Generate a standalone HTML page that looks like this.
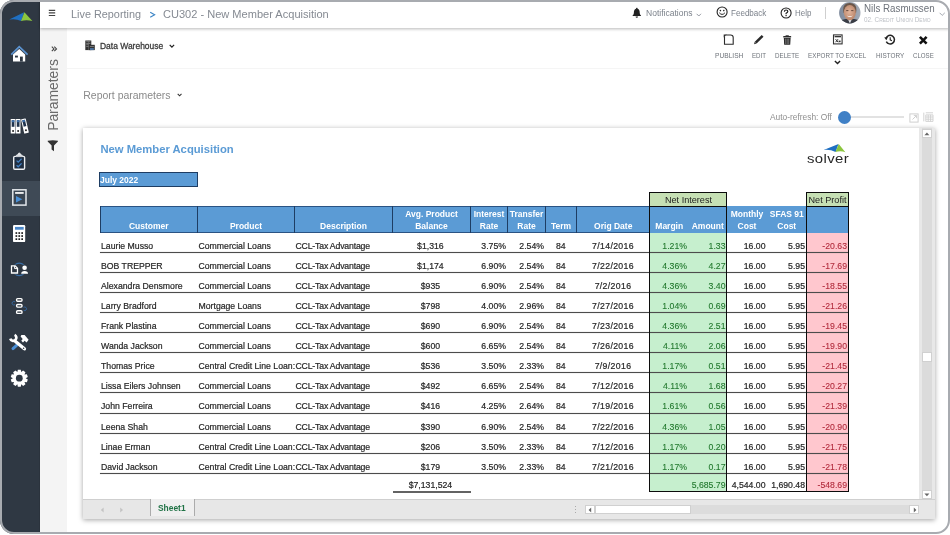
<!DOCTYPE html>
<html><head><meta charset="utf-8"><title>CU302 - New Member Acquisition</title>
<style>
*{box-sizing:border-box;margin:0;padding:0}
html,body{width:950px;height:535px;overflow:hidden;background:#fff;font-family:"Liberation Sans",sans-serif;}
#frame{position:absolute;left:0;top:0;width:950px;height:534px;border-radius:14px;overflow:hidden;background:#fff}
#frameb{position:absolute;left:0;top:0;width:950px;height:534px;border:2.5px solid #a8abb0;border-radius:14px;z-index:50;pointer-events:none}
#app{position:absolute;left:0;top:0;width:950px;height:535px;will-change:transform}
#side{position:absolute;left:0;top:0;width:40px;height:535px;background:#2f3843;border-right:1.5px solid #2b333d}
#side .act{position:absolute;left:0;top:181px;width:40px;height:35px;background:#3f4a56}
#side svg{position:absolute}
#params{position:absolute;left:40px;top:27px;width:27px;height:508px;background:#f4f4f4}
#top{position:absolute;left:40px;top:0;width:910px;height:27.5px;background:#fff;box-shadow:0 1px 3px rgba(0,0,0,.28);z-index:5}
#tool{position:absolute;left:67px;top:27px;width:883px;height:41.5px;background:#fff;border-bottom:1px solid #f5f5f5}
.t{position:absolute;white-space:nowrap;z-index:10}
svg.i{position:absolute;z-index:10;overflow:visible}
#sheet{position:absolute;left:82.5px;top:127.5px;width:852px;height:391.5px;background:#fff;box-shadow:0 1px 5px rgba(0,0,0,.36)}
#grid{position:absolute;left:-82.5px;top:-127.5px;width:950px;height:535px;font-size:8.7px;color:#262626}
.c{position:absolute;height:20.07px;line-height:12px;padding-top:7.4px;white-space:nowrap;overflow:hidden;padding-left:1px;padding-right:1.5px;-webkit-text-stroke:0.2px}
.al{text-align:left}.ac{text-align:center}.ar{text-align:right}
.c.g{color:#21782d;-webkit-text-stroke:0.1px}
.c.rd{color:#b22b3c;-webkit-text-stroke:0.1px}
.k2{letter-spacing:-0.17px}.k7{letter-spacing:0.36px}.k3{padding-right:3.2px}
.rl{position:absolute;left:100px;width:748.5px;height:1px;background:#4c4c4c;box-shadow:0 0 .8px rgba(70,70,70,.75)}
.hd{position:absolute;color:#fff;font-weight:bold;text-align:center;font-size:8.5px;line-height:12px;white-space:nowrap}
.vl{position:absolute;width:1.2px;background:#1e3d63;top:206px;height:26.5px}
.bx{position:absolute;border:1.5px solid #0c0c0c}
.lb{position:absolute;background:#c6e0b4;text-align:center;padding-top:1px;font-size:9.1px;color:#222;line-height:12px;white-space:nowrap;overflow:hidden}
</style></head><body>
<div id="frame"><div id="app">

<div id="side"><div class="act"></div>
<svg width="40" height="535" viewBox="0 0 40 535" style="left:0;top:0">
<!-- logo -->
<path d="M9.2,19.6 L24.2,12.2 L21.2,20.9 Q15.5,18.4 9.2,19.6Z" fill="#1f6fc2"/>
<path d="M24.4,12.3 L32.4,21 Q26.5,19.4 21,21Z" fill="#8cc63f"/>
<!-- home -->
<path d="M13,54.6 L19.25,49 L25.2,54.6 V61.6 H13Z" fill="#fff"/>
<path d="M11.2,54.6 L19.25,46.6 L27.6,54.6" fill="none" stroke="#5b93d0" stroke-width="1.7" stroke-linejoin="miter"/>
<rect x="15" y="55.6" width="2.9" height="1.9" fill="#2f3843"/>
<rect x="20" y="56.6" width="2.8" height="5" fill="#2f3843"/>
<!-- binders -->
<g>
<rect x="10.7" y="119" width="4.7" height="14.6" rx=".6" fill="#fff"/>
<rect x="11.7" y="120.2" width="2.7" height="6.6" fill="#21344d"/>
<rect x="11.7" y="120.2" width="2.7" height="2" fill="#4172aa"/>
<circle cx="13.05" cy="130.9" r="1" fill="#222"/>
<rect x="15.8" y="119" width="4.7" height="14.6" rx=".6" fill="#fff"/>
<rect x="16.8" y="120.2" width="2.7" height="6.6" fill="#21344d"/>
<rect x="16.8" y="120.2" width="2.7" height="2" fill="#4172aa"/>
<circle cx="18.15" cy="130.9" r="1" fill="#222"/>
<g transform="rotate(-13 25 126)">
<rect x="22.6" y="118.6" width="4.7" height="14.8" rx=".6" fill="#fff"/>
<rect x="23.6" y="119.8" width="2.7" height="6.6" fill="#21344d"/>
<rect x="23.6" y="119.8" width="2.7" height="2" fill="#4172aa"/>
<circle cx="24.95" cy="130.4" r="1" fill="#222"/>
</g></g>
<!-- clipboard -->
<rect x="13.7" y="156.4" width="10.9" height="12.8" rx="1.2" fill="#1f2d40" stroke="#eceef1" stroke-width="1.4"/>
<path d="M15.7,156.8 Q15.7,154.6 17.5,154.3 Q19.3,150.6 21.1,154.3 Q22.9,154.6 22.9,156.8Z" fill="#e4e7ea"/>
<rect x="16" y="155.6" width="6.4" height="1.5" fill="#c9ccd1"/>
<path d="M16.6,160.6 L18.2,162.2 L21.6,158.8 M16.6,165.2 L18.2,166.8 L21.6,163.4" fill="none" stroke="#4282c6" stroke-width="1.25"/>
<!-- play -->
<rect x="12.8" y="189.8" width="13.2" height="15.3" fill="#3a4653" stroke="#e3e7ec" stroke-width="1.5"/>
<rect x="15.1" y="192.1" width="8.6" height="1.7" fill="#fff"/>
<path d="M16,195.9 L22.3,199.2 L16,202.6Z" fill="#4a8fd6"/>
<!-- calculator -->
<rect x="13" y="225.1" width="12.2" height="17" rx="1.2" fill="#fff"/>
<rect x="15" y="226.9" width="8.7" height="2.8" fill="#4a86c8"/>
<g fill="#1c1c1c">
<rect x="15.5" y="232.2" width="1.7" height="1.7"/><rect x="18.4" y="232.2" width="1.7" height="1.7"/><rect x="21.3" y="232.2" width="1.7" height="1.7"/>
<rect x="15.5" y="235.2" width="1.7" height="1.7"/><rect x="18.4" y="235.2" width="1.7" height="1.7"/><rect x="21.3" y="235.2" width="1.7" height="1.7"/>
<rect x="15.5" y="238.3" width="1.7" height="1.7"/><rect x="18.4" y="238.3" width="1.7" height="1.7"/><rect x="21.3" y="238.3" width="1.7" height="1.7"/>
</g>
<!-- doc person -->
<circle cx="19.3" cy="269.4" r="6.2" fill="none" stroke="#3a6ea5" stroke-width="1.3"/>
<rect x="10.4" y="264.6" width="8.4" height="9.8" fill="#2f3843"/>
<path d="M11.5,265.9 H15.2 L17.5,268.2 V273 H11.5Z" fill="#2f3843" stroke="#fff" stroke-width="1.3"/>
<path d="M14.6,266 V268.6 H17.3" fill="none" stroke="#fff" stroke-width="1"/>
<rect x="20.6" y="264.8" width="8" height="9.4" fill="#2f3843"/>
<circle cx="24.6" cy="267.8" r="2.3" fill="#fff"/>
<path d="M21.2,273.7 Q21.2,270.9 24.6,270.9 Q28,270.9 28,273.7Z" fill="#fff"/>
<!-- workflow -->
<path d="M15,301.8 A1.8,1.8 0 1 0 15,304.6" fill="none" stroke="#34659b" stroke-width="1"/>
<path d="M23.6,307.4 A1.8,1.8 0 1 1 23.6,310.2" fill="none" stroke="#34659b" stroke-width="1"/>
<g fill="#262f39" stroke="#fff" stroke-width="1.4">
<rect x="16.6" y="298.6" width="5.4" height="2.6" rx="1"/>
<rect x="16.6" y="304.5" width="5.4" height="2.6" rx="1"/>
<rect x="16.6" y="310.8" width="5.4" height="2.6" rx="1"/>
</g>
<!-- tools -->
<path d="M13,348.6 L16.6,345.4" stroke="#4a8fd6" stroke-width="3" stroke-linecap="round"/>
<path d="M15.5,341.5 L24.4,348.8" stroke="#fff" stroke-width="3.4" stroke-linecap="round"/>
<circle cx="23.6" cy="348.2" r=".8" fill="#2f3843"/>
<path d="M14.6,334.9 A3.1,3.1 0 1 1 10.3,338.6" fill="none" stroke="#fff" stroke-width="2.7"/>
<path d="M21.4,334.9 L24.6,335.1 L28.6,339.7 L26.6,342.6 L24.6,340.7 L23,342.4 L21.3,340.7 L22.7,339 L20.6,336.6Z" fill="#fff"/>
<!-- gear -->
<path d="M17.35,372.11 L17.85,369.72 L20.75,369.72 L21.25,372.11 L21.30,372.12 L23.10,370.49 L25.46,372.20 L24.46,374.42 L24.49,374.46 L26.91,374.20 L27.81,376.96 L25.70,378.17 L25.70,378.23 L27.81,379.44 L26.91,382.20 L24.49,381.94 L24.46,381.98 L25.46,384.20 L23.10,385.91 L21.30,384.28 L21.25,384.29 L20.75,386.68 L17.85,386.68 L17.35,384.29 L17.30,384.28 L15.50,385.91 L13.14,384.20 L14.14,381.98 L14.11,381.94 L11.69,382.20 L10.79,379.44 L12.90,378.23 L12.90,378.17 L10.79,376.96 L11.69,374.20 L14.11,374.46 L14.14,374.42 L13.14,372.20 L15.50,370.49 L17.30,372.12Z" fill="#fff"/>
<circle cx="19.3" cy="378.2" r="3.4" fill="#2f3843"/>
<circle cx="19.3" cy="378.2" r="4.1" fill="none" stroke="#fff" stroke-width="0"/>
</svg>
</div>
<div id="params"></div>
<div id="top"></div>
<div id="tool"></div>
<span class="t" style="left:71.3px;top:7.54px;font-size:11.05px;line-height:13.26px;transform:scaleX(0.9827);transform-origin:0 0;color:#858a92">Live Reporting</span>
<span class="t" style="left:163.0px;top:7.54px;font-size:11.05px;line-height:13.26px;color:#858a92">CU302 - New Member Acquisition</span>
<span class="t" style="left:646.0px;top:8.20px;font-size:9.3px;line-height:11.16px;transform:scaleX(0.9163);transform-origin:0 0;color:#7c828b">Notifications</span>
<span class="t" style="left:730.5px;top:8.20px;font-size:9.3px;line-height:11.16px;transform:scaleX(0.8667);transform-origin:0 0;color:#7c828b">Feedback</span>
<span class="t" style="left:794.7px;top:8.20px;font-size:9.3px;line-height:11.16px;transform:scaleX(0.8523);transform-origin:0 0;color:#7c828b">Help</span>
<span class="t" style="left:863.8px;top:3.49px;font-size:10.47px;line-height:12.56px;transform:scaleX(0.9334);transform-origin:0 0;color:#6d727a">Nils Rasmussen</span>
<span class="t" style="left:99.9px;top:41.13px;font-size:9.16px;line-height:10.99px;transform:scaleX(0.9243);transform-origin:0 0;color:#3a3a3a;-webkit-text-stroke:0.3px">Data Warehouse</span>
<span class="t" style="left:714.5px;top:50.64px;font-size:7.56px;line-height:9.07px;transform:scaleX(0.8793);transform-origin:0 0;color:#6e737a">PUBLISH</span>
<span class="t" style="left:751.8px;top:50.64px;font-size:7.56px;line-height:9.07px;transform:scaleX(0.8138);transform-origin:0 0;color:#6e737a">EDIT</span>
<span class="t" style="left:775.0px;top:50.64px;font-size:7.56px;line-height:9.07px;transform:scaleX(0.8243);transform-origin:0 0;color:#6e737a">DELETE</span>
<span class="t" style="left:808.4px;top:50.64px;font-size:7.56px;line-height:9.07px;transform:scaleX(0.8324);transform-origin:0 0;color:#6e737a">EXPORT TO EXCEL</span>
<span class="t" style="left:875.8px;top:50.64px;font-size:7.56px;line-height:9.07px;transform:scaleX(0.8473);transform-origin:0 0;color:#6e737a">HISTORY</span>
<span class="t" style="left:912.6px;top:50.64px;font-size:7.56px;line-height:9.07px;transform:scaleX(0.8127);transform-origin:0 0;color:#6e737a">CLOSE</span>
<span class="t" style="left:83.3px;top:89.89px;font-size:10.47px;line-height:12.56px;color:#8a8a8a">Report parameters</span>
<span class="t" style="left:770.0px;top:112.37px;font-size:9.01px;line-height:10.81px;transform:scaleX(0.9311);transform-origin:0 0;color:#8f8f8f">Auto-refresh: Off</span>
<!-- hamburger -->
<svg class="i" style="left:48px;top:9px" width="8" height="8" viewBox="0 0 8 8"><path d="M0.8,1.3H7.2M0.8,3.9H7.2M0.8,6.5H7.2" stroke="#444" stroke-width="1.2"/></svg>
<svg class="i" style="left:149px;top:11px" width="7" height="7" viewBox="0 0 7 7"><path d="M1.2,1.2 L5.6,3.7 L1.2,6.2" fill="none" stroke="#3d85c6" stroke-width="1.15"/></svg>
<!-- bell -->
<svg class="i" style="left:631px;top:7px" width="12" height="12" viewBox="0 0 12 12"><path d="M5.8,0.8 C6.4,0.8 6.6,1.2 6.6,1.7 C8.2,2.2 8.7,3.8 8.7,5.4 C8.7,7 9.4,7.9 10,8.5 V9.1 H1.6 V8.5 C2.2,7.9 2.9,7 2.9,5.4 C2.9,3.8 3.4,2.2 5,1.7 C5,1.2 5.2,0.8 5.8,0.8Z" fill="#222"/><path d="M4.6,9.6 H7 A1.2,1.2 0 0 1 4.6,9.6Z" fill="#222"/></svg>
<!-- notif chevron -->
<svg class="i" style="left:696px;top:12.5px" width="6" height="4" viewBox="0 0 6 4"><path d="M0.6,0.8 L2.8,3 L5,0.8" fill="none" stroke="#8a8f98" stroke-width="0.9"/></svg>
<!-- smiley -->
<svg class="i" style="left:715.5px;top:6.3px" width="12" height="12" viewBox="0 0 12 12"><circle cx="6.1" cy="6" r="5" fill="none" stroke="#222" stroke-width="1.1"/><circle cx="4.4" cy="4.6" r=".8" fill="#222"/><circle cx="7.8" cy="4.6" r=".8" fill="#222"/><path d="M3.3,6.8 Q6.1,10 8.9,6.8" fill="none" stroke="#222" stroke-width="1"/></svg>
<!-- help -->
<svg class="i" style="left:779.5px;top:6.5px" width="12" height="12" viewBox="0 0 12 12"><circle cx="6.1" cy="6" r="5" fill="none" stroke="#222" stroke-width="1.1"/><path d="M4.4,4.7 Q4.4,3 6.1,3 Q7.8,3 7.8,4.5 Q7.8,5.5 6.1,6.3 V7.2" fill="none" stroke="#222" stroke-width="1.2"/><rect x="5.5" y="8" width="1.2" height="1.2" fill="#222"/></svg>
<!-- separator -->
<div style="position:absolute;left:824.5px;top:7px;width:1.1px;height:12px;background:#cfcfcf;z-index:10"></div>
<!-- avatar -->
<svg class="i" style="left:838.5px;top:1.8px" width="22" height="22" viewBox="0 0 22 22">
<defs><clipPath id="av"><circle cx="10.8" cy="10.8" r="10.7"/></clipPath>
<linearGradient id="avb" x1="0" x2="1"><stop offset="0" stop-color="#7f8b9d"/><stop offset="1" stop-color="#a4abb6"/></linearGradient>
<radialGradient id="avf" cx=".45" cy=".45" r=".6"><stop offset="0" stop-color="#e2b49b"/><stop offset="1" stop-color="#b98468"/></radialGradient></defs>
<g clip-path="url(#av)">
<rect width="22" height="22" fill="url(#avb)"/>
<path d="M-1,22 Q1,17.6 6.5,17 L15.5,17 Q21,17.6 23,22Z" fill="#3a3d45"/>
<path d="M8.6,16.6 L10.9,21.5 L13.2,16.6Z" fill="#dfe1e6"/>
<path d="M4.2,8 Q4,1 10.8,1 Q17.6,1 17.4,8 L17,11 L4.6,11Z" fill="#6b5648"/>
<ellipse cx="10.8" cy="10.6" rx="6" ry="7.6" fill="url(#avf)"/>
<path d="M7.6,13.4 Q10.8,16.6 14,13.4 Q10.8,14.4 7.6,13.4Z" fill="#f4ece6"/>
<path d="M7.2,8.6 H9.4 M12.2,8.6 H14.4" stroke="#5a4034" stroke-width=".9"/>
</g></svg>
<!-- user chevron -->
<svg class="i" style="left:938.5px;top:11.5px" width="7" height="5" viewBox="0 0 7 5"><path d="M0.6,0.8 L3.2,3.4 L5.8,0.8" fill="none" stroke="#9a9fa8" stroke-width="0.9"/></svg>
<span class="t" style="left:863.8px;top:14.8px;font-size:7.8px;line-height:9.4px;color:#bcbfc5;transform:scaleX(0.816);transform-origin:0 0;margin-top:0.5px">02. C<span style="font-size:6.1px">REDIT</span> U<span style="font-size:6.1px">NION</span> D<span style="font-size:6.1px">EMO</span></span>

<!-- params strip -->
<svg class="i" style="left:50.5px;top:45.5px" width="7" height="6" viewBox="0 0 7 6"><path d="M0.8,0.7 L3,2.9 L0.8,5.1 M3.3,0.7 L5.5,2.9 L3.3,5.1" fill="none" stroke="#444" stroke-width="1.1"/></svg>
<div class="t" style="left:52.4px;top:94.8px;width:0;height:0"><div style="position:absolute;white-space:nowrap;transform:translate(-50%,-50%) rotate(-90deg) scaleX(0.925);font-size:15px;color:#6a6a6a">Parameters</div></div>
<svg class="i" style="left:47px;top:140px" width="12" height="12" viewBox="0 0 12 12"><path d="M0.7,0.7 Q5.8,-0.3 10.9,0.7 V1.6 L7,5.6 V11.2 L4.6,9.6 V5.6 L0.7,1.6Z" fill="#333"/></svg>

<!-- data warehouse icon -->
<svg class="i" style="left:85px;top:40px" width="11" height="11" viewBox="0 0 11 11">
<rect x="0.3" y="0.5" width="6" height="9.6" fill="#333"/>
<rect x="4" y="4.8" width="5.8" height="5.3" fill="#333"/>
<g fill="#bbb"><rect x="1.2" y="1.6" width="4.2" height=".5"/><rect x="1.2" y="3.1" width="4.2" height=".5"/><rect x="1.2" y="4.6" width="2.4" height=".5"/><rect x="1.2" y="6.1" width="2.4" height=".5"/><rect x="4.9" y="6" width="4" height=".5"/></g>
<rect x="5" y="8" width="3.8" height="2.1" fill="#4a6f9a"/>
<rect x="3.3" y="0.5" width=".5" height="9.6" fill="#777"/>
</svg>
<svg class="i" style="left:169px;top:44px" width="6" height="5" viewBox="0 0 6 5"><path d="M0.7,0.9 L2.9,3.1 L5.1,0.9" fill="none" stroke="#222" stroke-width="1.3"/></svg>
<svg class="i" style="left:176.5px;top:93px" width="6" height="5" viewBox="0 0 6 5"><path d="M0.7,0.9 L2.6,2.8 L4.5,0.9" fill="none" stroke="#333" stroke-width="1.1"/></svg>

<!-- toolbar icons -->
<svg class="i" style="left:723px;top:34px" width="12" height="12" viewBox="0 0 12 12"><path d="M2.6,1 H7.6 Q10.2,1 10.2,3.6 V10.2 H1.5 V2.2" fill="none" stroke="#2a2a2a" stroke-width="1.1"/><path d="M0.7,0.5 L3.7,0.5 L0.7,3.5Z" fill="#2a2a2a"/></svg>
<svg class="i" style="left:753px;top:34px" width="12" height="12" viewBox="0 0 12 12"><path d="M2.7,8.7 L9.6,1.8" stroke="#2a2a2a" stroke-width="2.6"/><path d="M1.1,10.2 L1.7,7.7 L3.5,9.5Z" fill="#2a2a2a"/></svg>
<svg class="i" style="left:782px;top:35px" width="10" height="11" viewBox="0 0 10 11"><rect x="1.2" y="0.9" width="8" height="1.5" rx=".5" fill="#2a2a2a"/><rect x="3.6" y="0.3" width="3.2" height="1" fill="#2a2a2a"/><path d="M1.8,2.9 H8.6 L8.2,9.8 H2.2Z" fill="#2a2a2a"/><path d="M3.7,3.6 V9 M5.2,3.6 V9 M6.7,3.6 V9" stroke="#aaa" stroke-width=".55"/></svg>
<svg class="i" style="left:832px;top:34px" width="12" height="11" viewBox="0 0 12 11"><rect x="1.5" y="0.9" width="8.6" height="9" fill="none" stroke="#333" stroke-width="1.1"/><rect x="2.6" y="2" width="6.4" height="1.3" fill="#333"/><path d="M3.6,5.2 L6,8.2 M6,5.2 L3.6,8.2" stroke="#333" stroke-width="1"/><rect x="6.6" y="6.6" width="2" height="1.6" fill="#333"/></svg>
<svg class="i" style="left:834px;top:59.5px" width="7" height="5" viewBox="0 0 7 5"><path d="M0.9,0.9 L3.5,3.5 L6.1,0.9" fill="none" stroke="#222" stroke-width="1.4"/></svg>
<svg class="i" style="left:884px;top:34px" width="12" height="12" viewBox="0 0 12 12"><path d="M2.1,4.2 A4.3,4.3 0 1 1 2.3,7.6" fill="none" stroke="#222" stroke-width="1.5"/><path d="M0.2,3.4 L3.9,3.1 L2.4,6.3Z" fill="#222"/><path d="M6.2,3.2 V5.8 L7.9,6.7" fill="none" stroke="#222" stroke-width="1.1"/></svg>
<svg class="i" style="left:918px;top:34.5px" width="11" height="11" viewBox="0 0 11 11"><path d="M1.9,1.9 L8.6,8.6 M8.6,1.9 L1.9,8.6" stroke="#111" stroke-width="2.6" stroke-linecap="butt"/></svg>

<!-- auto refresh -->
<div style="position:absolute;left:844px;top:116.3px;width:60px;height:2px;background:#e2e2e2;z-index:9"></div>
<div style="position:absolute;left:837.5px;top:110.6px;width:13.4px;height:13.4px;border-radius:50%;background:#3f80c6;z-index:10"></div>
<svg class="i" style="left:909px;top:112.5px" width="10" height="10" viewBox="0 0 10 10"><rect x="0.9" y="0.9" width="8.2" height="8.2" fill="none" stroke="#cfcfcf" stroke-width="1"/><path d="M3.5,6.5 L7.4,2.6 M4.8,2.4 H7.6 V5.2" fill="none" stroke="#cfcfcf" stroke-width="1"/></svg>
<svg class="i" style="left:923px;top:112px" width="11" height="10" viewBox="0 0 11 10"><path d="M0.8,0.6 V9.4 M2.8,0.8 H10 M2.8,2.9 H10 V9.4 H2.8 V2.9 M2.8,5 H10 M2.8,7.2 H10 M5.2,2.9 V9.4 M7.6,2.9 V9.4" fill="none" stroke="#cfcfcf" stroke-width=".9"/></svg>


<div id="sheet"><div id="grid">
<!-- fills -->
<div style="position:absolute;left:650px;top:232.5px;width:77px;height:259px;background:#c6efce"></div>
<div style="position:absolute;left:806.5px;top:232.5px;width:42px;height:259px;background:#ffc7ce"></div>
<div style="position:absolute;left:100px;top:206px;width:748.5px;height:26.5px;background:#5b9bd5"></div>
<div style="position:absolute;left:100px;top:205.7px;width:550px;height:1.1px;background:#2a5383"></div>
<div style="position:absolute;left:100px;top:231.8px;width:550px;height:1.1px;background:#2a5383"></div>
<div class="rl" style="top:252px"></div>
<div class="c al k0" style="left:100.0px;width:97.5px;top:232.50px">Laurie Musso</div>
<div class="c al k1" style="left:197.5px;width:97.0px;top:232.50px">Commercial Loans</div>
<div class="c al k2" style="left:294.5px;width:98.0px;top:232.50px">CCL-Tax Advantage</div>
<div class="c ac k3" style="left:392.5px;width:78.0px;top:232.50px">$1,316</div>
<div class="c ar k4" style="left:470.5px;width:37.0px;top:232.50px">3.75%</div>
<div class="c ar k5" style="left:507.5px;width:38.0px;top:232.50px">2.54%</div>
<div class="c ac k6" style="left:545.5px;width:31.0px;top:232.50px">84</div>
<div class="c ac k7" style="left:576.5px;width:73.5px;top:232.50px">7/14/2016</div>
<div class="c ar k8 g" style="left:650.0px;width:38.5px;top:232.50px">1.21%</div>
<div class="c ar k9 g" style="left:688.5px;width:38.5px;top:232.50px">1.33</div>
<div class="c ar k10" style="left:727.0px;width:40.0px;top:232.50px">16.00</div>
<div class="c ar k11" style="left:767.0px;width:39.5px;top:232.50px">5.95</div>
<div class="c ar k12 rd" style="left:806.5px;width:42.0px;top:232.50px">-20.63</div>
<div class="rl" style="top:272px"></div>
<div class="c al k0" style="left:100.0px;width:97.5px;top:252.57px">BOB TREPPER</div>
<div class="c al k1" style="left:197.5px;width:97.0px;top:252.57px">Commercial Loans</div>
<div class="c al k2" style="left:294.5px;width:98.0px;top:252.57px">CCL-Tax Advantage</div>
<div class="c ac k3" style="left:392.5px;width:78.0px;top:252.57px">$1,174</div>
<div class="c ar k4" style="left:470.5px;width:37.0px;top:252.57px">6.90%</div>
<div class="c ar k5" style="left:507.5px;width:38.0px;top:252.57px">2.54%</div>
<div class="c ac k6" style="left:545.5px;width:31.0px;top:252.57px">84</div>
<div class="c ac k7" style="left:576.5px;width:73.5px;top:252.57px">7/22/2016</div>
<div class="c ar k8 g" style="left:650.0px;width:38.5px;top:252.57px">4.36%</div>
<div class="c ar k9 g" style="left:688.5px;width:38.5px;top:252.57px">4.27</div>
<div class="c ar k10" style="left:727.0px;width:40.0px;top:252.57px">16.00</div>
<div class="c ar k11" style="left:767.0px;width:39.5px;top:252.57px">5.95</div>
<div class="c ar k12 rd" style="left:806.5px;width:42.0px;top:252.57px">-17.69</div>
<div class="rl" style="top:292px"></div>
<div class="c al k0" style="left:100.0px;width:97.5px;top:272.64px">Alexandra Densmore</div>
<div class="c al k1" style="left:197.5px;width:97.0px;top:272.64px">Commercial Loans</div>
<div class="c al k2" style="left:294.5px;width:98.0px;top:272.64px">CCL-Tax Advantage</div>
<div class="c ac k3" style="left:392.5px;width:78.0px;top:272.64px">$935</div>
<div class="c ar k4" style="left:470.5px;width:37.0px;top:272.64px">6.90%</div>
<div class="c ar k5" style="left:507.5px;width:38.0px;top:272.64px">2.54%</div>
<div class="c ac k6" style="left:545.5px;width:31.0px;top:272.64px">84</div>
<div class="c ac k7" style="left:576.5px;width:73.5px;top:272.64px">7/2/2016</div>
<div class="c ar k8 g" style="left:650.0px;width:38.5px;top:272.64px">4.36%</div>
<div class="c ar k9 g" style="left:688.5px;width:38.5px;top:272.64px">3.40</div>
<div class="c ar k10" style="left:727.0px;width:40.0px;top:272.64px">16.00</div>
<div class="c ar k11" style="left:767.0px;width:39.5px;top:272.64px">5.95</div>
<div class="c ar k12 rd" style="left:806.5px;width:42.0px;top:272.64px">-18.55</div>
<div class="rl" style="top:312px"></div>
<div class="c al k0" style="left:100.0px;width:97.5px;top:292.71px">Larry Bradford</div>
<div class="c al k1" style="left:197.5px;width:97.0px;top:292.71px">Mortgage Loans</div>
<div class="c al k2" style="left:294.5px;width:98.0px;top:292.71px">CCL-Tax Advantage</div>
<div class="c ac k3" style="left:392.5px;width:78.0px;top:292.71px">$798</div>
<div class="c ar k4" style="left:470.5px;width:37.0px;top:292.71px">4.00%</div>
<div class="c ar k5" style="left:507.5px;width:38.0px;top:292.71px">2.96%</div>
<div class="c ac k6" style="left:545.5px;width:31.0px;top:292.71px">84</div>
<div class="c ac k7" style="left:576.5px;width:73.5px;top:292.71px">7/27/2016</div>
<div class="c ar k8 g" style="left:650.0px;width:38.5px;top:292.71px">1.04%</div>
<div class="c ar k9 g" style="left:688.5px;width:38.5px;top:292.71px">0.69</div>
<div class="c ar k10" style="left:727.0px;width:40.0px;top:292.71px">16.00</div>
<div class="c ar k11" style="left:767.0px;width:39.5px;top:292.71px">5.95</div>
<div class="c ar k12 rd" style="left:806.5px;width:42.0px;top:292.71px">-21.26</div>
<div class="rl" style="top:332px"></div>
<div class="c al k0" style="left:100.0px;width:97.5px;top:312.78px">Frank Plastina</div>
<div class="c al k1" style="left:197.5px;width:97.0px;top:312.78px">Commercial Loans</div>
<div class="c al k2" style="left:294.5px;width:98.0px;top:312.78px">CCL-Tax Advantage</div>
<div class="c ac k3" style="left:392.5px;width:78.0px;top:312.78px">$690</div>
<div class="c ar k4" style="left:470.5px;width:37.0px;top:312.78px">6.90%</div>
<div class="c ar k5" style="left:507.5px;width:38.0px;top:312.78px">2.54%</div>
<div class="c ac k6" style="left:545.5px;width:31.0px;top:312.78px">84</div>
<div class="c ac k7" style="left:576.5px;width:73.5px;top:312.78px">7/23/2016</div>
<div class="c ar k8 g" style="left:650.0px;width:38.5px;top:312.78px">4.36%</div>
<div class="c ar k9 g" style="left:688.5px;width:38.5px;top:312.78px">2.51</div>
<div class="c ar k10" style="left:727.0px;width:40.0px;top:312.78px">16.00</div>
<div class="c ar k11" style="left:767.0px;width:39.5px;top:312.78px">5.95</div>
<div class="c ar k12 rd" style="left:806.5px;width:42.0px;top:312.78px">-19.45</div>
<div class="rl" style="top:352px"></div>
<div class="c al k0" style="left:100.0px;width:97.5px;top:332.85px">Wanda Jackson</div>
<div class="c al k1" style="left:197.5px;width:97.0px;top:332.85px">Commercial Loans</div>
<div class="c al k2" style="left:294.5px;width:98.0px;top:332.85px">CCL-Tax Advantage</div>
<div class="c ac k3" style="left:392.5px;width:78.0px;top:332.85px">$600</div>
<div class="c ar k4" style="left:470.5px;width:37.0px;top:332.85px">6.65%</div>
<div class="c ar k5" style="left:507.5px;width:38.0px;top:332.85px">2.54%</div>
<div class="c ac k6" style="left:545.5px;width:31.0px;top:332.85px">84</div>
<div class="c ac k7" style="left:576.5px;width:73.5px;top:332.85px">7/26/2016</div>
<div class="c ar k8 g" style="left:650.0px;width:38.5px;top:332.85px">4.11%</div>
<div class="c ar k9 g" style="left:688.5px;width:38.5px;top:332.85px">2.06</div>
<div class="c ar k10" style="left:727.0px;width:40.0px;top:332.85px">16.00</div>
<div class="c ar k11" style="left:767.0px;width:39.5px;top:332.85px">5.95</div>
<div class="c ar k12 rd" style="left:806.5px;width:42.0px;top:332.85px">-19.90</div>
<div class="rl" style="top:372px"></div>
<div class="c al k0" style="left:100.0px;width:97.5px;top:352.92px">Thomas Price</div>
<div class="c al k1" style="left:197.5px;width:97.0px;top:352.92px">Central Credit Line Loan:</div>
<div class="c al k2" style="left:294.5px;width:98.0px;top:352.92px">CCL-Tax Advantage</div>
<div class="c ac k3" style="left:392.5px;width:78.0px;top:352.92px">$536</div>
<div class="c ar k4" style="left:470.5px;width:37.0px;top:352.92px">3.50%</div>
<div class="c ar k5" style="left:507.5px;width:38.0px;top:352.92px">2.33%</div>
<div class="c ac k6" style="left:545.5px;width:31.0px;top:352.92px">84</div>
<div class="c ac k7" style="left:576.5px;width:73.5px;top:352.92px">7/9/2016</div>
<div class="c ar k8 g" style="left:650.0px;width:38.5px;top:352.92px">1.17%</div>
<div class="c ar k9 g" style="left:688.5px;width:38.5px;top:352.92px">0.51</div>
<div class="c ar k10" style="left:727.0px;width:40.0px;top:352.92px">16.00</div>
<div class="c ar k11" style="left:767.0px;width:39.5px;top:352.92px">5.95</div>
<div class="c ar k12 rd" style="left:806.5px;width:42.0px;top:352.92px">-21.45</div>
<div class="rl" style="top:392px"></div>
<div class="c al k0" style="left:100.0px;width:97.5px;top:372.99px">Lissa Eilers Johnsen</div>
<div class="c al k1" style="left:197.5px;width:97.0px;top:372.99px">Commercial Loans</div>
<div class="c al k2" style="left:294.5px;width:98.0px;top:372.99px">CCL-Tax Advantage</div>
<div class="c ac k3" style="left:392.5px;width:78.0px;top:372.99px">$492</div>
<div class="c ar k4" style="left:470.5px;width:37.0px;top:372.99px">6.65%</div>
<div class="c ar k5" style="left:507.5px;width:38.0px;top:372.99px">2.54%</div>
<div class="c ac k6" style="left:545.5px;width:31.0px;top:372.99px">84</div>
<div class="c ac k7" style="left:576.5px;width:73.5px;top:372.99px">7/12/2016</div>
<div class="c ar k8 g" style="left:650.0px;width:38.5px;top:372.99px">4.11%</div>
<div class="c ar k9 g" style="left:688.5px;width:38.5px;top:372.99px">1.68</div>
<div class="c ar k10" style="left:727.0px;width:40.0px;top:372.99px">16.00</div>
<div class="c ar k11" style="left:767.0px;width:39.5px;top:372.99px">5.95</div>
<div class="c ar k12 rd" style="left:806.5px;width:42.0px;top:372.99px">-20.27</div>
<div class="rl" style="top:413px"></div>
<div class="c al k0" style="left:100.0px;width:97.5px;top:393.06px">John Ferreira</div>
<div class="c al k1" style="left:197.5px;width:97.0px;top:393.06px">Commercial Loans</div>
<div class="c al k2" style="left:294.5px;width:98.0px;top:393.06px">CCL-Tax Advantage</div>
<div class="c ac k3" style="left:392.5px;width:78.0px;top:393.06px">$416</div>
<div class="c ar k4" style="left:470.5px;width:37.0px;top:393.06px">4.25%</div>
<div class="c ar k5" style="left:507.5px;width:38.0px;top:393.06px">2.64%</div>
<div class="c ac k6" style="left:545.5px;width:31.0px;top:393.06px">84</div>
<div class="c ac k7" style="left:576.5px;width:73.5px;top:393.06px">7/19/2016</div>
<div class="c ar k8 g" style="left:650.0px;width:38.5px;top:393.06px">1.61%</div>
<div class="c ar k9 g" style="left:688.5px;width:38.5px;top:393.06px">0.56</div>
<div class="c ar k10" style="left:727.0px;width:40.0px;top:393.06px">16.00</div>
<div class="c ar k11" style="left:767.0px;width:39.5px;top:393.06px">5.95</div>
<div class="c ar k12 rd" style="left:806.5px;width:42.0px;top:393.06px">-21.39</div>
<div class="rl" style="top:433px"></div>
<div class="c al k0" style="left:100.0px;width:97.5px;top:413.13px">Leena Shah</div>
<div class="c al k1" style="left:197.5px;width:97.0px;top:413.13px">Commercial Loans</div>
<div class="c al k2" style="left:294.5px;width:98.0px;top:413.13px">CCL-Tax Advantage</div>
<div class="c ac k3" style="left:392.5px;width:78.0px;top:413.13px">$390</div>
<div class="c ar k4" style="left:470.5px;width:37.0px;top:413.13px">6.90%</div>
<div class="c ar k5" style="left:507.5px;width:38.0px;top:413.13px">2.54%</div>
<div class="c ac k6" style="left:545.5px;width:31.0px;top:413.13px">84</div>
<div class="c ac k7" style="left:576.5px;width:73.5px;top:413.13px">7/22/2016</div>
<div class="c ar k8 g" style="left:650.0px;width:38.5px;top:413.13px">4.36%</div>
<div class="c ar k9 g" style="left:688.5px;width:38.5px;top:413.13px">1.05</div>
<div class="c ar k10" style="left:727.0px;width:40.0px;top:413.13px">16.00</div>
<div class="c ar k11" style="left:767.0px;width:39.5px;top:413.13px">5.95</div>
<div class="c ar k12 rd" style="left:806.5px;width:42.0px;top:413.13px">-20.90</div>
<div class="rl" style="top:453px"></div>
<div class="c al k0" style="left:100.0px;width:97.5px;top:433.20px">Linae Erman</div>
<div class="c al k1" style="left:197.5px;width:97.0px;top:433.20px">Central Credit Line Loan:</div>
<div class="c al k2" style="left:294.5px;width:98.0px;top:433.20px">CCL-Tax Advantage</div>
<div class="c ac k3" style="left:392.5px;width:78.0px;top:433.20px">$206</div>
<div class="c ar k4" style="left:470.5px;width:37.0px;top:433.20px">3.50%</div>
<div class="c ar k5" style="left:507.5px;width:38.0px;top:433.20px">2.33%</div>
<div class="c ac k6" style="left:545.5px;width:31.0px;top:433.20px">84</div>
<div class="c ac k7" style="left:576.5px;width:73.5px;top:433.20px">7/12/2016</div>
<div class="c ar k8 g" style="left:650.0px;width:38.5px;top:433.20px">1.17%</div>
<div class="c ar k9 g" style="left:688.5px;width:38.5px;top:433.20px">0.20</div>
<div class="c ar k10" style="left:727.0px;width:40.0px;top:433.20px">16.00</div>
<div class="c ar k11" style="left:767.0px;width:39.5px;top:433.20px">5.95</div>
<div class="c ar k12 rd" style="left:806.5px;width:42.0px;top:433.20px">-21.75</div>
<div class="rl" style="top:473px"></div>
<div class="c al k0" style="left:100.0px;width:97.5px;top:453.27px">David Jackson</div>
<div class="c al k1" style="left:197.5px;width:97.0px;top:453.27px">Central Credit Line Loan:</div>
<div class="c al k2" style="left:294.5px;width:98.0px;top:453.27px">CCL-Tax Advantage</div>
<div class="c ac k3" style="left:392.5px;width:78.0px;top:453.27px">$179</div>
<div class="c ar k4" style="left:470.5px;width:37.0px;top:453.27px">3.50%</div>
<div class="c ar k5" style="left:507.5px;width:38.0px;top:453.27px">2.33%</div>
<div class="c ac k6" style="left:545.5px;width:31.0px;top:453.27px">84</div>
<div class="c ac k7" style="left:576.5px;width:73.5px;top:453.27px">7/21/2016</div>
<div class="c ar k8 g" style="left:650.0px;width:38.5px;top:453.27px">1.17%</div>
<div class="c ar k9 g" style="left:688.5px;width:38.5px;top:453.27px">0.17</div>
<div class="c ar k10" style="left:727.0px;width:40.0px;top:453.27px">16.00</div>
<div class="c ar k11" style="left:767.0px;width:39.5px;top:453.27px">5.95</div>
<div class="c ar k12 rd" style="left:806.5px;width:42.0px;top:453.27px">-21.78</div>
<div class="c ac k3" style="left:392.5px;width:78.0px;top:471.84px">$7,131,524</div>
<div class="c ar k9 g" style="left:650.0px;width:77.0px;top:471.84px">5,685.79</div>
<div class="c ar k10" style="left:727.0px;width:40.0px;top:471.84px">4,544.00</div>
<div class="c ar k11" style="left:767.0px;width:39.5px;top:471.84px">1,690.48</div>
<div class="c ar k12 rd" style="left:806.5px;width:42.0px;top:471.84px">-548.69</div>
<div class="vl" style="left:99.5px"></div>
<div class="vl" style="left:196.9px"></div>
<div class="vl" style="left:293.9px"></div>
<div class="vl" style="left:391.9px"></div>
<div class="vl" style="left:469.9px"></div>
<div class="vl" style="left:506.9px"></div>
<div class="vl" style="left:544.9px"></div>
<div class="vl" style="left:575.9px"></div>
<div class="hd" style="left:100px;width:97.5px;top:220.3px">Customer</div>
<div class="hd" style="left:197.5px;width:97px;top:220.3px">Product</div>
<div class="hd" style="left:294.5px;width:98px;top:220.3px">Description</div>
<div class="hd" style="left:392.5px;width:78px;top:208.3px">Avg. Product<br>Balance</div>
<div class="hd" style="left:470.5px;width:37px;top:208.3px">Interest<br>Rate</div>
<div class="hd" style="left:507.5px;width:38px;top:208.3px">Transfer<br>Rate</div>
<div class="hd" style="left:545.5px;width:31px;top:220.3px">Term</div>
<div class="hd" style="left:576.5px;width:73.5px;top:220.3px">Orig Date</div>
<div class="hd" style="left:650px;width:38.5px;top:220.3px">Margin</div>
<div class="hd" style="left:688.5px;width:38.5px;top:220.3px">Amount</div>
<div class="hd" style="left:727px;width:40px;top:208.3px">Monthly<br>Cost</div>
<div class="hd" style="left:767px;width:39.5px;top:208.3px">SFAS 91<br>Cost</div>
<div class="lb" style="left:650px;width:77px;top:193px;height:13.5px">Net Interest</div>
<div class="lb" style="left:806.5px;width:42px;top:193px;height:13.5px">Net Profit</div>
<div class="bx" style="left:649.3px;top:192px;width:78px;height:15px"></div>
<div class="bx" style="left:649.3px;top:192px;width:78px;height:300.2px"></div>
<div class="bx" style="left:805.8px;top:192px;width:42.8px;height:15px"></div>
<div class="bx" style="left:805.8px;top:192px;width:42.8px;height:300.2px"></div>
<div style="position:absolute;left:393px;top:490.9px;width:78px;height:1.7px;background:#636363"></div>
<div class="t" style="left:100.4px;top:142.5px;font-size:11.25px;font-weight:bold;color:#5b9bd5;line-height:13px">New Member Acquisition</div>
<div style="position:absolute;left:99px;top:172.3px;width:99px;height:14.8px;background:#5b9bd5;border:1.2px solid #1e3d63"></div>
<div class="t" style="left:100.3px;top:174px;font-size:9.4px;font-weight:bold;color:#fff;line-height:12px;transform:scaleX(0.905);transform-origin:0 0">July 2022</div>

<div style="position:absolute;left:727px;top:490.7px;width:80px;height:1.5px;background:#0c0c0c"></div>

</div>
<!-- positions relative to #sheet (left 82, top 127.5) -->
<!-- solver logo -->
<svg style="position:absolute;left:722px;top:14px;overflow:visible" width="46" height="24" viewBox="0 0 46 24">
<path d="M18.6,8 L33.5,2 L30.6,10 Q25,7.2 18.6,8Z" fill="#1f6fc2"/>
<path d="M33.7,2.1 L40.4,10.2 Q35.5,8.4 30.4,10.1Z" fill="#8cc63f"/>
</svg>
<div style="position:absolute;left:724.3px;top:23.1px;font-size:13.2px;line-height:16px;color:#262626;letter-spacing:0.35px;white-space:nowrap;transform:scaleX(1.13);transform-origin:0 0">solver</div>
<!-- vertical scrollbar -->
<div style="position:absolute;left:836.6px;top:0;width:15.5px;height:371px;background:linear-gradient(to right,#e8e8e8 0,#e8e8e8 2.6px,#dbdbdb 2.6px,#dbdbdb 12.8px,#e8e8e8 12.8px)"></div>
<div style="position:absolute;left:839.3px;top:1.1px;width:10.3px;height:9.9px;background:#fff;border:0.5px solid #d0d0d0"></div>
<svg style="position:absolute;left:841.7px;top:4.4px" width="6" height="4" viewBox="0 0 6 4"><path d="M0.4,3.2 L2.9,0.6 L5.4,3.2Z" fill="#666"/></svg>
<div style="position:absolute;left:839.4px;top:224.8px;width:10px;height:9.9px;background:#fff;border:0.5px solid #d0d0d0"></div>
<div style="position:absolute;left:839.3px;top:362.3px;width:10.3px;height:9.6px;background:#fff;border:0.5px solid #d0d0d0"></div>
<svg style="position:absolute;left:841.7px;top:365.8px" width="6" height="4" viewBox="0 0 6 4"><path d="M0.4,0.6 L5.4,0.6 L2.9,3.2Z" fill="#666"/></svg>
<!-- bottom bar -->
<div style="position:absolute;left:0;top:371px;width:852px;height:20.5px;background:#e7e7e7;border-top:1px solid #cfcfcf"></div>
<div style="position:absolute;left:67px;top:371px;width:45.5px;height:17.2px;background:#efefef;border-left:1.2px solid #ababab;border-right:1.2px solid #ababab"></div>
<div style="position:absolute;left:75.8px;top:375.2px;font-size:9.2px;line-height:11px;font-weight:bold;color:#217346;white-space:nowrap;transform:scaleX(0.915);transform-origin:0 0">Sheet1</div>
<svg style="position:absolute;left:17.3px;top:379px" width="5" height="6" viewBox="0 0 5 6"><path d="M3.6,0.6 L0.8,3 L3.6,5.4Z" fill="#c4c4c4"/></svg>
<svg style="position:absolute;left:36.4px;top:379px" width="5" height="6" viewBox="0 0 5 6"><path d="M1.2,0.6 L4,3 L1.2,5.4Z" fill="#c4c4c4"/></svg>
<!-- h scrollbar -->
<div style="position:absolute;left:492.6px;top:378px;width:1.2px;height:1.2px;background:#aaa"></div>
<div style="position:absolute;left:492.6px;top:381px;width:1.2px;height:1.2px;background:#aaa"></div>
<div style="position:absolute;left:492.6px;top:384px;width:1.2px;height:1.2px;background:#aaa"></div>
<div style="position:absolute;left:502.2px;top:377px;width:334.6px;height:9.6px;background:#dcdcdc"></div>
<div style="position:absolute;left:502.2px;top:377px;width:10.3px;height:9.6px;background:#fff;border:0.5px solid #d0d0d0"></div>
<svg style="position:absolute;left:505.2px;top:379px" width="4" height="6" viewBox="0 0 4 6"><path d="M3.2,0.4 L0.6,2.9 L3.2,5.4Z" fill="#666"/></svg>
<div style="position:absolute;left:512.6px;top:377px;width:95.5px;height:9.6px;background:#fff;border:0.5px solid #d0d0d0"></div>
<div style="position:absolute;left:826.6px;top:377px;width:10.3px;height:9.6px;background:#fff;border:0.5px solid #d0d0d0"></div>
<svg style="position:absolute;left:830.2px;top:379px" width="4" height="6" viewBox="0 0 4 6"><path d="M0.8,0.4 L3.4,2.9 L0.8,5.4Z" fill="#666"/></svg>

</div>

</div></div><div id="frameb"></div>
</body></html>
